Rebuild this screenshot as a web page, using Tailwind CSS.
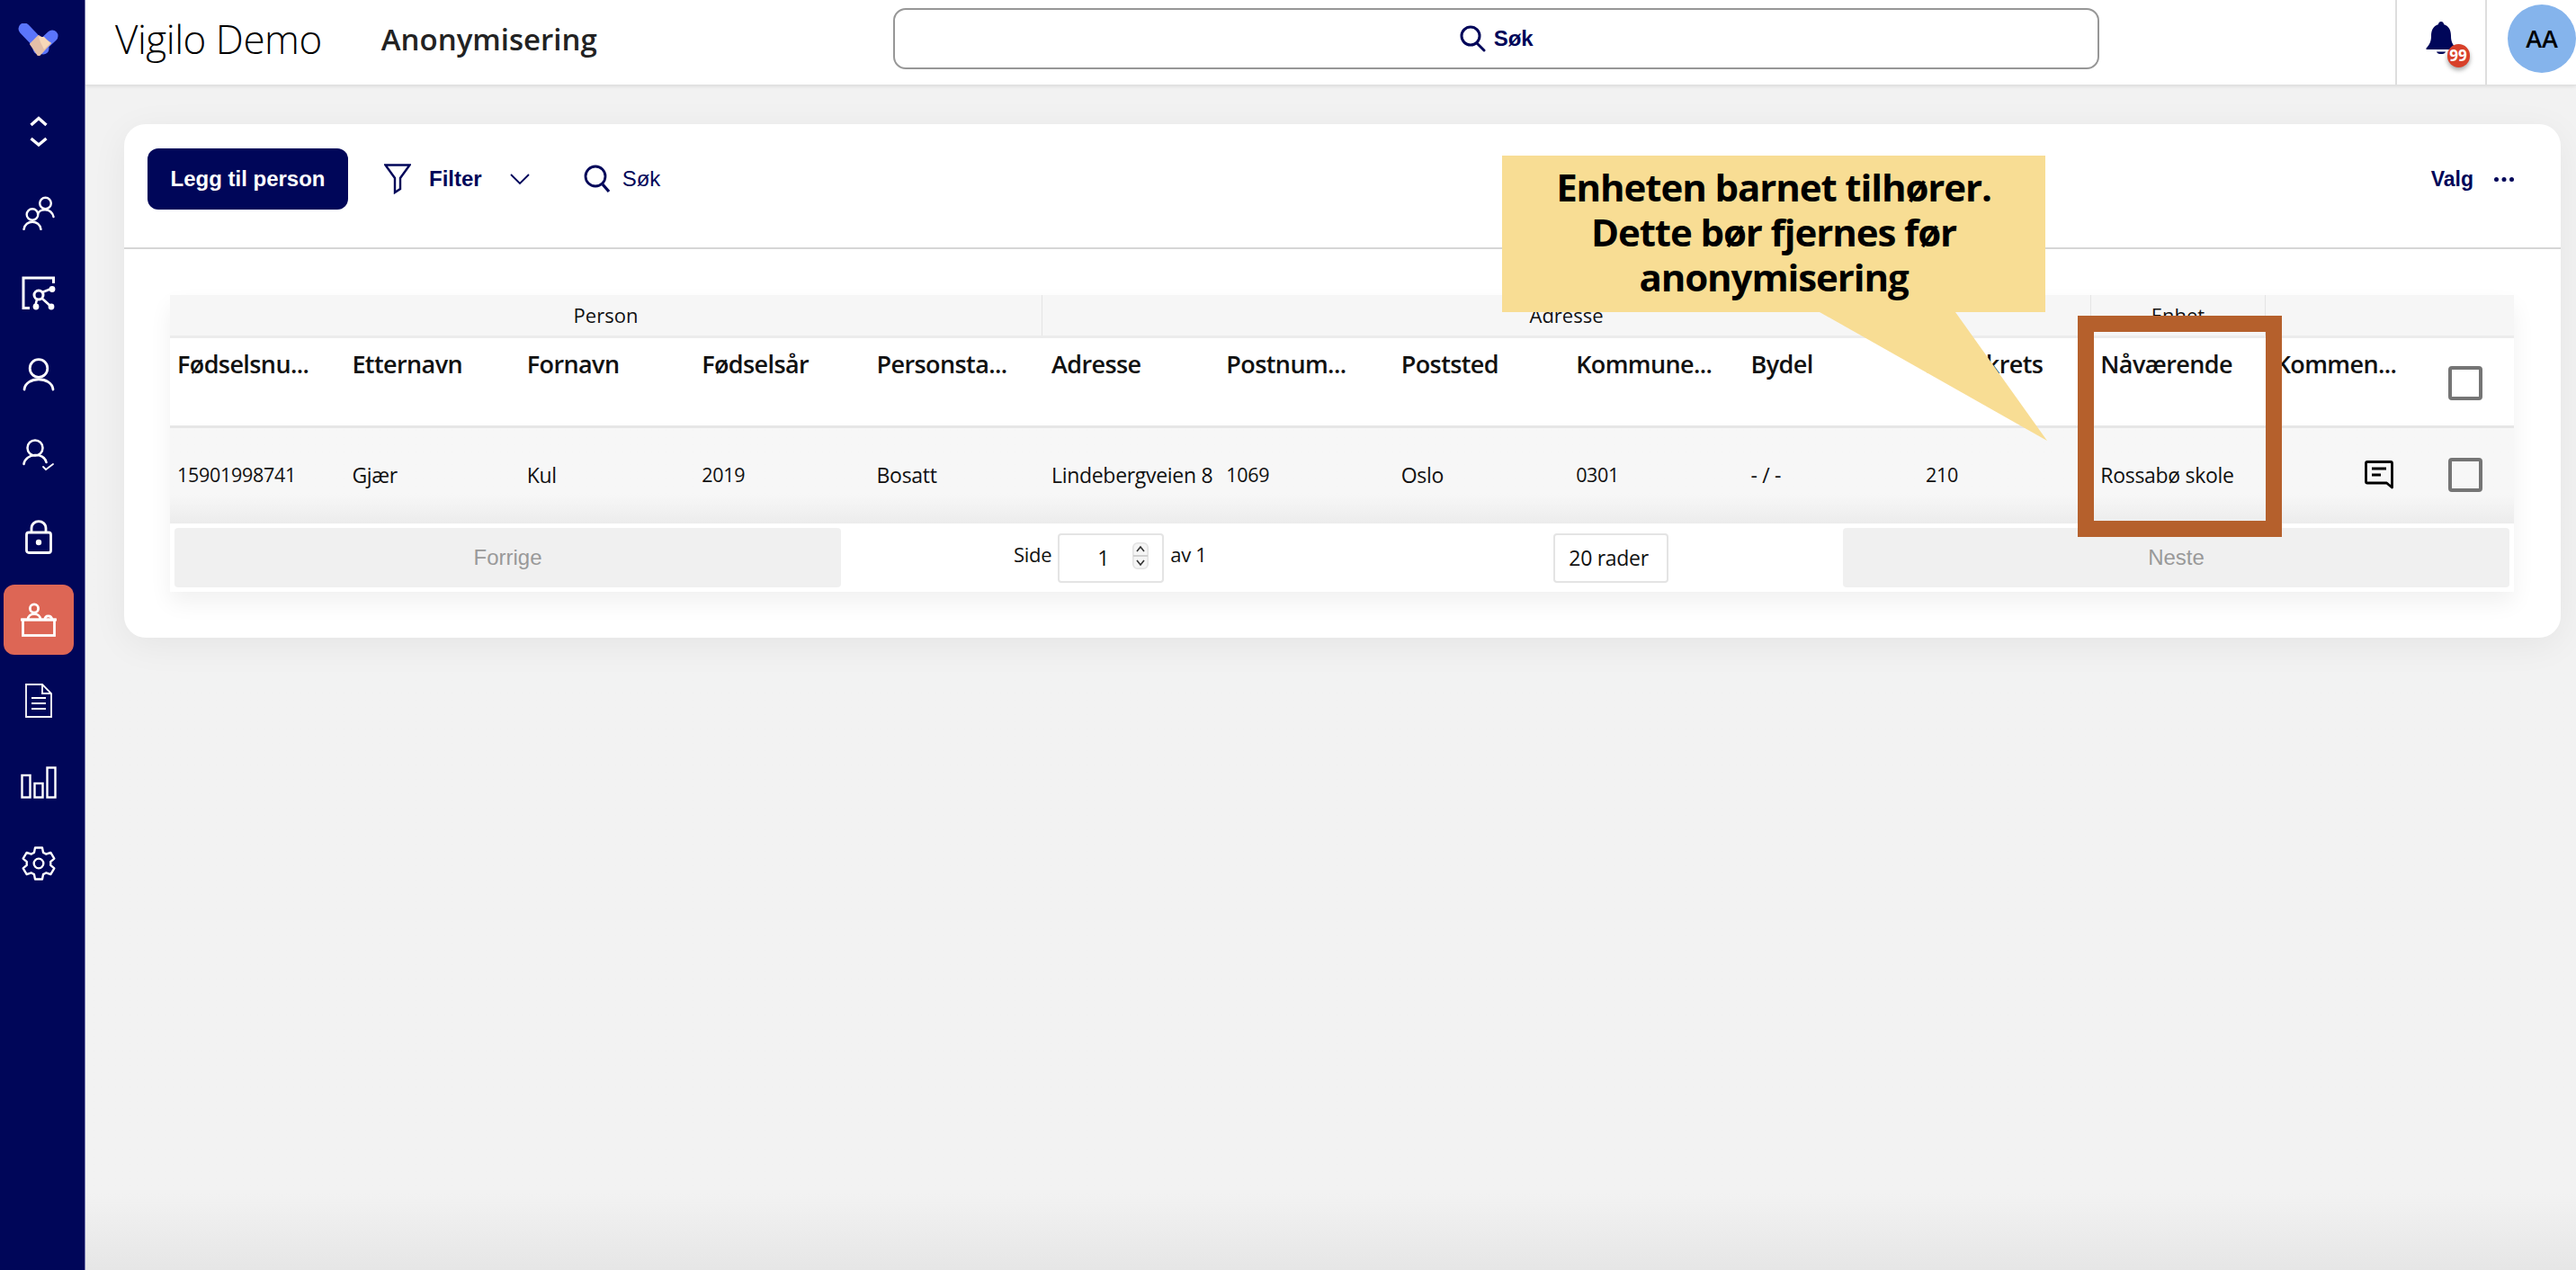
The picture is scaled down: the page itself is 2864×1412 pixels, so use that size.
<!DOCTYPE html>
<html lang="en">
  <head>
    <meta charset="UTF-8" />
    <title>Anonymisering</title>
    <script src="https://cdn.jsdelivr.net/npm/@tailwindcss/browser@4"></script>
  </head>
  <body class="bg-[#f2f2f2] font-['Open_Sans',sans-serif] text-black overflow-hidden">
    <div class="relative flex h-[1412px] w-[2864px] overflow-hidden bg-gradient-to-b from-[#f2f2f2] from-94% to-[#e6e6e6]">
      <!-- sidebar -->
      <nav class="flex flex-col items-center w-[95px] shrink-0 pr-[8px] bg-[#000659] border-r border-[#7a7db0]">
        <svg class="mt-[26px] w-[46px] h-[36px]" viewBox="0 0 46 36">
          <path d="M7 6 L28 28" stroke="#5b75fb" stroke-width="13" stroke-linecap="round"/>
          <path d="M23 28 L38 14" stroke="#5b75fb" stroke-width="13" stroke-linecap="round"/>
          <path d="M14 23 L23 14 L36 22 L23 36 Z" fill="#e3bfa8" stroke="#e3bfa8" stroke-width="2" stroke-linejoin="round"/>
          <path d="M23 15 L29 15 L36 22 L29 29 L25 21 Z" fill="#f8d8b8"/>
        </svg>
        <svg class="mt-[67px] w-[20px] h-[34px] shrink-0" viewBox="0 0 20 34" fill="none" stroke="#fff" stroke-width="3.4">
          <path d="M1.5 10 L10 2.5 L18.500 10"/><path d="M1.5 25 L10 32 L18.500 25"/>
        </svg>
        <svg class="mt-[55px] w-[36px] h-[38px] shrink-0" viewBox="0 0 36 38" fill="none" stroke="#fff" stroke-width="2.4" stroke-linecap="round">
          <circle cx="25.500" cy="8" r="6.300"/><path d="M17 20 C19 13.500 32 13 34.500 23"/>
          <circle cx="11" cy="20.500" r="6.300"/><path d="M1.500 37 C3 26 19 26 20.500 37"/>
        </svg>
        <svg class="mt-[51px] w-[38px] h-[38px] shrink-0" viewBox="0 0 38 38" fill="none" stroke="#fff">
          <path d="M9 35.500 H2 V2 H35.500 V8" stroke-width="3"/>
          <circle cx="19" cy="21" r="5" stroke-width="3"/>
          <path d="M23 18 L33 14 M23 25 L33 34 M17 26 L15 34" stroke-width="2.600"/>
          <circle cx="34" cy="14.500" r="3.400" fill="#fff" stroke="none"/><circle cx="33" cy="34" r="3.400" fill="#fff" stroke="none"/><circle cx="16" cy="34" r="3.400" fill="#fff" stroke="none"/>
        </svg>
        <svg class="mt-[53px] w-[36px] h-[37px] shrink-0" viewBox="0 0 36 37" fill="none" stroke="#fff" stroke-width="2.800" stroke-linecap="round">
          <circle cx="18" cy="11.500" r="9.800"/><path d="M2 35 C3.500 20 32.500 20 34 35"/>
        </svg>
        <svg class="mt-[53px] w-[36px] h-[36px] shrink-0" viewBox="0 0 36 36" fill="none" stroke="#fff" stroke-linecap="round">
          <circle cx="14" cy="10" r="8.500" stroke-width="2.500"/><path d="M1.500 28 C3 16 24 14 26.500 26" stroke-width="2.500"/>
          <path d="M23 31 L26 34 L34 28" stroke-width="1.800"/>
        </svg>
        <svg class="mt-[54px] w-[30px] h-[38px] shrink-0" viewBox="0 0 30 38" fill="none" stroke="#fff" stroke-width="2.800">
          <rect x="1.500" y="14" width="27" height="22.500" rx="2.500"/><path d="M7 14 V9.500 C7 -1 23 -1 23 9.500 V14"/>
          <circle cx="15" cy="25" r="3.200" fill="#fff" stroke="none"/>
        </svg>
        <div class="mt-[34px] flex items-center justify-center w-[78px] h-[78px] shrink-0 rounded-[12px] bg-[#dd6655]">
          <svg class="w-[40px] h-[38px]" viewBox="0 0 40 38" fill="none" stroke="#fff" stroke-width="2.800">
            <circle cx="15" cy="6.500" r="4.600"/><path d="M8 19 C8 10.500 22 10.500 22 19"/>
            <path d="M27 19 C27 13.500 34 13.500 35 19"/>
            <path d="M0 19 H40"/><rect x="2.500" y="19" width="35" height="17.500"/>
          </svg>
        </div>
        <svg class="mt-[32px] w-[30px] h-[38px] shrink-0" viewBox="0 0 30 38" fill="none" stroke="#fff" stroke-width="1.800">
          <path d="M1 1 H19 L29 11 V37 H1 Z"/><path d="M19 1 V11 H29" /><path d="M7 16 H23 M7 22 H23 M7 28 H23" stroke-width="2"/>
        </svg>
        <svg class="mt-[54px] w-[40px] h-[36px] shrink-0" viewBox="0 0 40 36" fill="none" stroke="#fff" stroke-width="2.400">
          <rect x="1.500" y="10" width="9" height="24.500"/><rect x="15.500" y="19" width="9" height="15.500"/><rect x="29.500" y="1.500" width="9" height="33"/>
        </svg>
        <svg class="mt-[52px] w-[40px] h-[40px] shrink-0" viewBox="0 0 24 24" fill="none" stroke="#fff" stroke-width="1.400" stroke-linejoin="round">
          <circle cx="12" cy="12" r="3.200"/>
          <path d="M9.600 1.500 H14.400 L15 4.700 C15.700 5 16.300 5.300 16.900 5.800 L20 4.700 L22.400 8.800 L19.900 10.900 C20 11.600 20 12.400 19.900 13.100 L22.400 15.200 L20 19.300 L16.900 18.200 C16.300 18.700 15.700 19 15 19.300 L14.400 22.500 H9.600 L9 19.300 C8.300 19 7.700 18.700 7.100 18.200 L4 19.300 L1.600 15.200 L4.100 13.100 C4 12.400 4 11.600 4.100 10.900 L1.600 8.800 L4 4.700 L7.100 5.800 C7.700 5.300 8.300 5 9 4.700 Z"/>
        </svg>
      </nav>

      <div class="flex-1 flex flex-col min-w-0">
        <!-- header -->
        <header class="flex items-center h-[95px] pb-[8px] shrink-0 bg-white border-b border-[#e0e0e0] shadow-[0_1px_4px_rgba(0,0,0,0.1)]">
          <h1 class="ml-[33px] w-[296px] text-[44px] leading-none font-light tracking-[-0.5px] whitespace-nowrap">Vigilo Demo</h1>
          <h2 class="w-[570px] text-[33px] leading-none font-semibold text-[#222] whitespace-nowrap">Anonymisering</h2>
          <div class="flex items-center justify-center gap-[9px] w-[1342px] h-[68px] rounded-[14px] border-2 border-[#979797] text-[#000659] font-['Liberation_Sans',sans-serif] font-bold text-[24px]">
            <svg class="w-[29px] h-[30px]" viewBox="0 0 29 30" fill="none" stroke="#000659" stroke-width="3"><circle cx="12" cy="12" r="10"/><path d="M19 20 L27 28" stroke-linecap="round"/></svg>
            Søk
          </div>
          <div class="ml-[329px] flex items-center justify-center w-[102px] self-stretch -mb-[8px] border-x-2 border-[#dedede]">
            <div class="relative w-[34px] h-[36px] mr-[1px] mt-[-11px]">
              <svg class="w-[34px] h-[36px]" viewBox="0 0 34 36" fill="#000659"><path d="M17 0 C19 0 20 1.500 20 3 C26 5 28 10 28 16 C28 22 30 26 33.500 29.500 V31 H0.500 V29.500 C4 26 6 22 6 16 C6 10 8 5 14 3 C14 1.500 15 0 17 0 Z"/><path d="M12 33.500 H22 C21 37 13 37 12 33.500 Z"/></svg>
              <span class="absolute left-[24px] top-[25px] flex items-center justify-center w-[25px] h-[26px] rounded-full bg-[#d8402a] text-white text-[17px] leading-none font-bold shadow-[0_3px_5px_rgba(0,0,0,0.35)]">99</span>
            </div>
          </div>
          <div class="ml-[23px] shrink-0 flex items-center justify-center w-[76px] h-[76px] rounded-full bg-[#85b4ec] text-[27px] font-semibold">AA</div>
        </header>

        <!-- card -->
        <main class="pt-[43px] pl-[43px] pr-[17px]">
          <section class="bg-white rounded-[24px] h-[571px] shadow-[0_8px_40px_rgba(0,0,0,0.06)]">
            <div class="flex items-center h-[139px] pl-[26px] pr-[52px] pb-[15px] border-b-2 border-[#d6d6d6] font-['Liberation_Sans',sans-serif] text-[#000659]">
              <button class="w-[223px] h-[68px] rounded-[12px] bg-[#000659] text-white font-bold text-[24px]">Legg til person</button>
              <svg class="ml-[40px] w-[30px] h-[34px]" viewBox="0 0 30 34" fill="none" stroke="#000659" stroke-width="2.400"><path d="M1.500 1.500 H28.500 L18 16 V28 L12 32 V16 Z"/></svg>
              <span class="ml-[20px] font-bold text-[24px]">Filter</span>
              <svg class="ml-[31px] w-[22px] h-[14px]" viewBox="0 0 22 14" fill="none" stroke="#000659" stroke-width="1.800"><path d="M1 2 L11 12 L21 2"/></svg>
              <svg class="ml-[60px] w-[30px] h-[32px]" viewBox="0 0 30 32" fill="none" stroke="#000659" stroke-width="2.800"><circle cx="13" cy="13" r="11"/><path d="M21 22 L28 30" stroke-width="3.400"/></svg>
              <span class="ml-[13px] text-[24px]">Søk</span>
              <span class="ml-auto font-bold text-[23px]">Valg</span>
              <svg class="ml-[23px] w-[22px] h-[5px]" viewBox="0 0 22 5" fill="#000659"><circle cx="2.500" cy="2.500" r="2.500"/><circle cx="11" cy="2.500" r="2.500"/><circle cx="19.500" cy="2.500" r="2.500"/></svg>
            </div>

            <!-- table -->
            <div class="mt-[51px] ml-[51px] mr-[52px] shadow-[0_12px_24px_rgba(0,0,0,0.06)]">
              <div class="grid grid-cols-[970px_1166px_194px_1fr] h-[48px] bg-[#f6f6f6] border-b-[3px] border-[#ececec] text-[22px] text-[#111]">
                <div class="flex items-center justify-center border-r border-[#e4e4e4]">Person</div>
                <div class="flex items-center justify-center border-r border-[#e4e4e4]">Adresse</div>
                <div class="flex items-center justify-center border-r border-[#e4e4e4]">Enhet</div>
                <div></div>
              </div>
              <div class="grid grid-cols-[repeat(13,194.4px)_1fr] h-[100px] bg-white border-b-[3px] border-[#e6e6e6] text-[27px] leading-[38px] font-semibold text-[#111] tracking-[-0.6px]">
                <div class="pl-[8px] pt-[10px] truncate">Fødselsnu...</div>
                <div class="pl-[8px] pt-[10px] truncate">Etternavn</div>
                <div class="pl-[8px] pt-[10px] truncate">Fornavn</div>
                <div class="pl-[8px] pt-[10px] truncate">Fødselsår</div>
                <div class="pl-[8px] pt-[10px] truncate">Personsta...</div>
                <div class="pl-[8px] pt-[10px] truncate">Adresse</div>
                <div class="pl-[8px] pt-[10px] truncate">Postnum...</div>
                <div class="pl-[8px] pt-[10px] truncate">Poststed</div>
                <div class="pl-[8px] pt-[10px] truncate">Kommune...</div>
                <div class="pl-[8px] pt-[10px] truncate">Bydel</div>
                <div class="pl-[8px] pt-[10px] truncate">Skolekrets</div>
                <div class="pl-[8px] pt-[10px] truncate">Nåværende</div>
                <div class="pl-[8px] pt-[10px] whitespace-nowrap overflow-hidden">Kommen...</div>
                <div class="flex items-center justify-center pt-[3px] pr-[30px]"><span class="w-[38px] h-[38px] rounded-[4px] border-[4px] border-[#757575]"></span></div>
              </div>
              <div class="grid grid-cols-[repeat(13,194.4px)_1fr] items-center h-[106px] pb-[2px] bg-gradient-to-b from-[#f7f7f7] from-70% to-[#ececec] text-[23px] text-[#111] tracking-[-0.3px]">
                <div class="pl-[8px] truncate text-[21.500px]">15901998741</div>
                <div class="pl-[8px] truncate">Gjær</div>
                <div class="pl-[8px] truncate">Kul</div>
                <div class="pl-[8px] truncate text-[21.500px]">2019</div>
                <div class="pl-[8px] truncate">Bosatt</div>
                <div class="pl-[8px] whitespace-nowrap overflow-hidden">Lindebergveien 8</div>
                <div class="pl-[8px] truncate text-[21.500px]">1069</div>
                <div class="pl-[8px] truncate">Oslo</div>
                <div class="pl-[8px] truncate text-[21.500px]">0301</div>
                <div class="pl-[8px] truncate">- / -</div>
                <div class="pl-[8px] truncate text-[21.500px]">210</div>
                <div class="pl-[8px] truncate">Rossabø skole</div>
                <div class="flex justify-end pr-[55px]">
                  <svg class="w-[32px] h-[32px]" viewBox="0 0 32 32" fill="none" stroke="#000" stroke-width="2.800"><path d="M3 1.500 H29 Q30.500 1.500 30.500 3 V30 L24.500 25 H3 Q1.500 25 1.500 23.500 V3 Q1.500 1.500 3 1.500 Z" stroke-linejoin="round"/><path d="M8 9 H24 M8 16 H18"/></svg>
                </div>
                <div class="flex items-center justify-center pr-[30px]"><span class="w-[38px] h-[38px] rounded-[4px] border-[4px] border-[#757575]"></span></div>
              </div>
              <!-- pager -->
              <div class="flex items-center h-[76px] px-[5px] bg-white text-[22px] text-[#111] tracking-[-0.3px]">
                <button class="w-[741px] h-[66px] rounded-[4px] bg-[#f0f0f0] text-[#999] font-['Liberation_Sans',sans-serif] text-[24px] tracking-normal">Forrige</button>
                <span class="ml-[192px] mt-[-8px]">Side</span>
                <div class="ml-[7px] flex items-center w-[118px] h-[55px] rounded-[4px] border-2 border-[#e4e4e4] pl-[42px]">
                  <span class="text-[23px]">1</span>
                  <svg class="ml-[26px] w-[18px] h-[30px] mt-[-4px]" viewBox="0 0 18 30" fill="none" stroke="#333" stroke-width="1.600"><rect x="0.800" y="0.800" width="16.400" height="28.400" rx="5" fill="#f5f5f5" stroke="#e2e2e2"/><path d="M5 10 L9 5 L13 10 M5 20 L9 25 L13 20"/><path d="M1 15 H17" stroke="#c8c8c8"/></svg>
                </div>
                <span class="ml-[7px] mt-[-8px]">av 1</span>
                <div class="ml-[385px] flex items-center justify-center w-[128px] h-[55px] rounded-[4px] border-2 border-[#e4e4e4] text-[23px] pr-[4px]">20 rader</div>
                <button class="ml-auto w-[741px] h-[66px] rounded-[4px] bg-[#f0f0f0] text-[#999] font-['Liberation_Sans',sans-serif] text-[24px] tracking-normal">Neste</button>
              </div>
            </div>
          </section>
        </main>
      </div>

      <!-- annotation over the table -->
      <div class="absolute left-[1670px] top-[173px] flex flex-col justify-center w-[604px] h-[174px] pb-[5px] bg-[#f8dd94] text-center text-[42px] leading-[50px] font-bold tracking-[-1.100px] text-black">
        <p>Enheten barnet tilhører.</p>
        <p>Dette bør fjernes før</p>
        <p>anonymisering</p>
      </div>
      <svg class="absolute left-[2020px] top-[346px] w-[260px] h-[146px]" viewBox="0 0 260 146">
        <polygon points="3,1 154,1 256,144" fill="#f8dd94"/>
      </svg>
      <div class="absolute left-[2310px] top-[351px] w-[227px] h-[246px] border-[18px] border-[#b5602c]"></div>
    </div>
  </body>
</html>
